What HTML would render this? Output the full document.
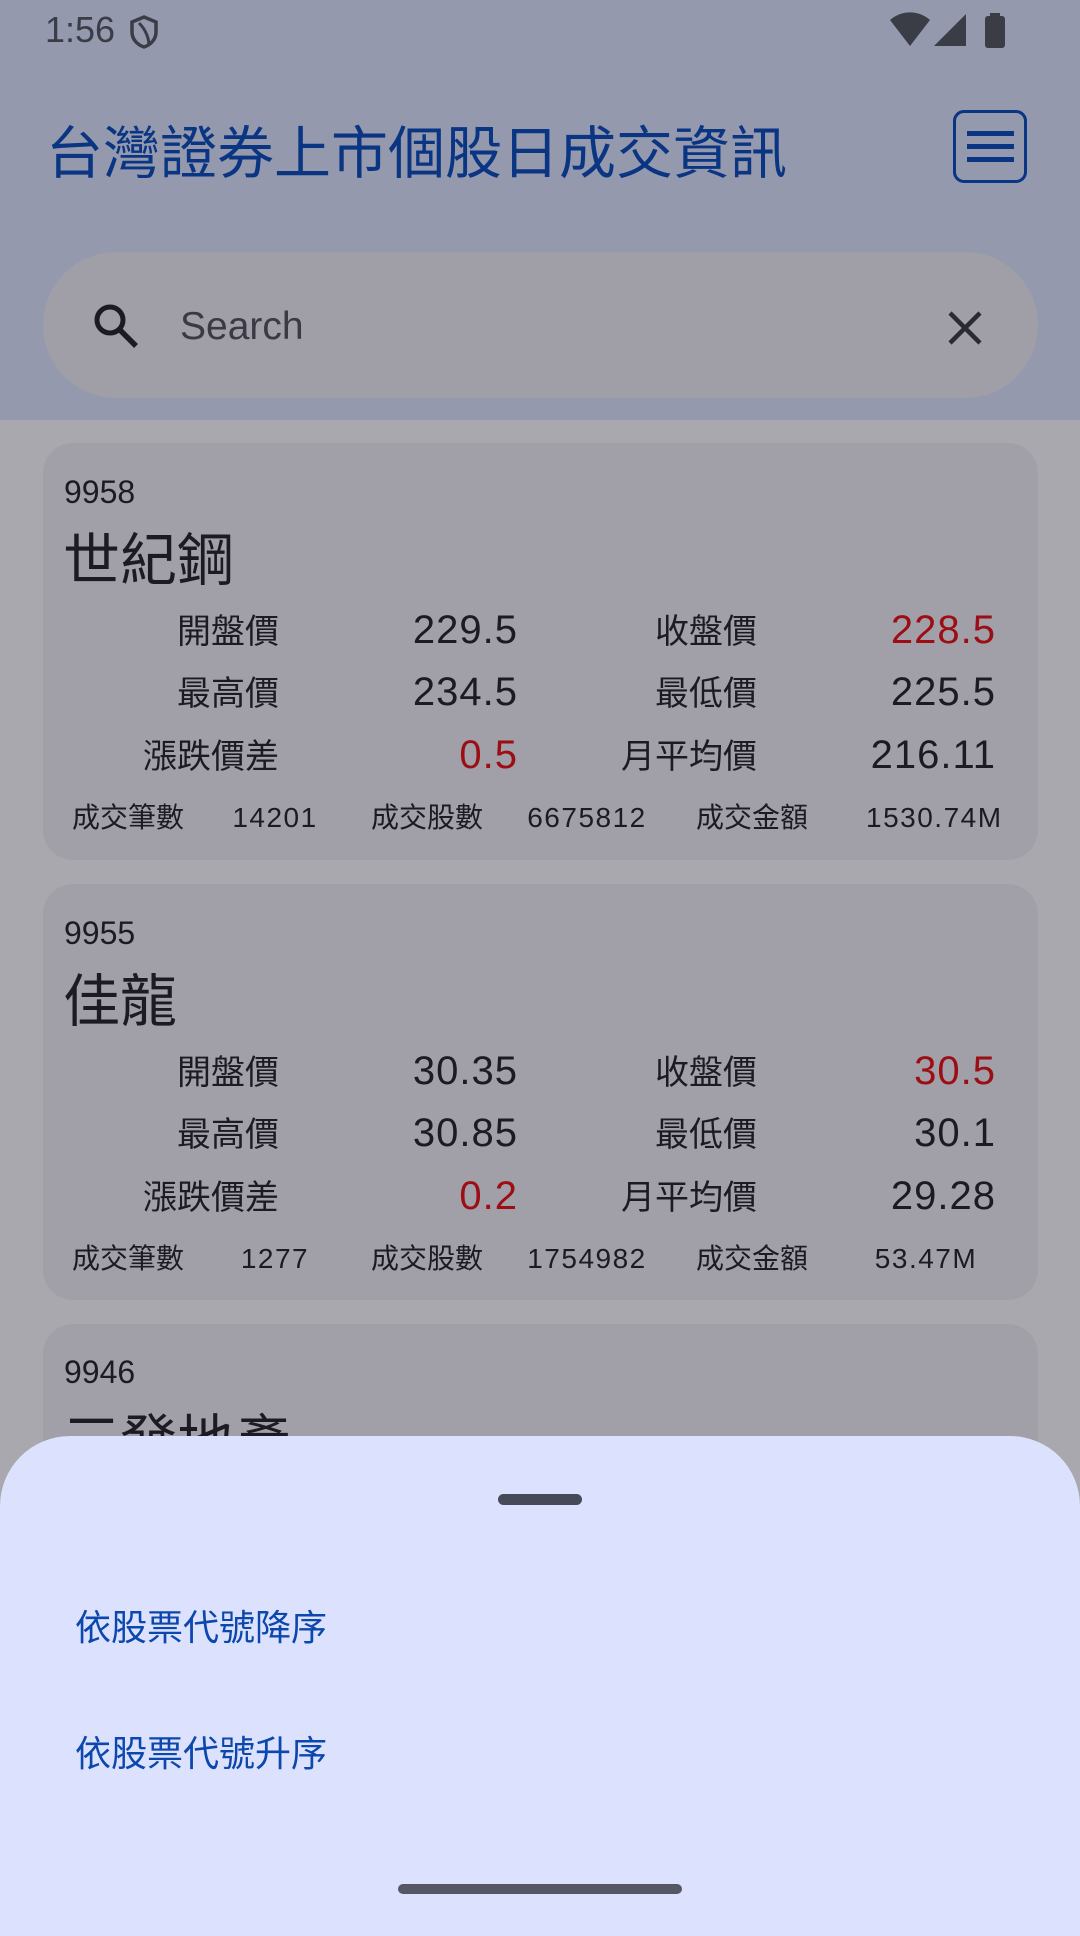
<!DOCTYPE html>
<html><head><meta charset="utf-8">
<style>
*{margin:0;padding:0;box-sizing:border-box}
body{width:1080px;height:1920px;position:relative;overflow:hidden;background:#a9a8ae;font-family:"Liberation Sans","Noto Sans CJK TC",sans-serif;color:#1c1b24}
.a{position:absolute;white-space:nowrap;line-height:1}
#hdr{position:absolute;left:0;top:0;width:1080px;height:420px;background:#9499ad}
.card{position:absolute;left:43px;width:995px;background:#a1a0a9;border-radius:30px}
.lab{position:absolute;font-size:34px;line-height:1;text-align:right;white-space:nowrap}
.val{position:absolute;font-size:40px;line-height:1;text-align:right;white-space:nowrap;letter-spacing:1px}
.r{color:#9c0d14}
.sm{position:absolute;font-size:28px;line-height:1;white-space:nowrap;text-align:center}
.n{letter-spacing:1.5px}
</style></head><body>
<div id="hdr"></div>
<div class="a" style="left:45px;top:12px;font-size:36px;color:#3a3c46">1:56</div>
<svg class="a" style="left:128px;top:14px" width="32" height="36" viewBox="0 0 32 36"><path d="M16 3 L28 8 V18 C28 26 22 31 16 33 C10 31 4 26 4 18 V8 Z" fill="none" stroke="#3a3c46" stroke-width="3.5"/><path d="M11 9 C16 14 20 20 21 30" fill="none" stroke="#3a3c46" stroke-width="3"/></svg>
<svg class="a" style="left:888px;top:12px" width="120" height="38" viewBox="0 0 120 38"><path d="M2 8 A30 30 0 0 1 42 8 L22 34 Z" fill="#3a3c46"/><path d="M46 34 L78 2 V34 Z" fill="#3a3c46"/><rect x="97" y="4" width="20" height="32" rx="3" fill="#3a3c46"/><rect x="102" y="1" width="10" height="5" fill="#3a3c46"/></svg>
<div class="a" style="left:46px;top:126px;font-size:57px;color:#0a3583">台灣證券上市個股日成交資訊</div>
<div class="a" style="left:953px;top:110px;width:74px;height:73px;border:3.5px solid #0a3583;border-radius:11px"></div>
<div class="a" style="left:967px;top:131px;width:47px;height:5px;background:#0a3583"></div>
<div class="a" style="left:967px;top:144px;width:47px;height:5px;background:#0a3583"></div>
<div class="a" style="left:967px;top:157px;width:47px;height:5px;background:#0a3583"></div>
<div class="a" style="left:43px;top:252px;width:995px;height:146px;background:#a09fa8;border-radius:73px"></div>
<svg class="a" style="left:90px;top:300px" width="60" height="60" viewBox="0 0 60 60"><circle cx="20" cy="20" r="13" fill="none" stroke="#1c1b24" stroke-width="5"/><path d="M29 29 L46 46" stroke="#1c1b24" stroke-width="5.5"/></svg>
<div class="a" style="left:180px;top:307px;font-size:39px;color:#3a3a44">Search</div>
<svg class="a" style="left:944px;top:307px" width="42" height="42" viewBox="0 0 42 42"><path d="M6 6 L36 36 M36 6 L6 36" stroke="#2a2a32" stroke-width="4.5"/></svg>

<div class="card" style="top:443px;height:417px">
 <div class="a" style="left:21px;top:33px;font-size:32px">9958</div>
 <div class="a" style="left:20px;top:90px;font-size:57px">世紀鋼</div>
 <div class="lab" style="right:759px;top:172px">開盤價</div><div class="val" style="right:520px;top:167px">229.5</div>
 <div class="lab" style="right:281px;top:172px">收盤價</div><div class="val r" style="right:42px;top:167px">228.5</div>
 <div class="lab" style="right:759px;top:234px">最高價</div><div class="val" style="right:520px;top:229px">234.5</div>
 <div class="lab" style="right:281px;top:234px">最低價</div><div class="val" style="right:42px;top:229px">225.5</div>
 <div class="lab" style="right:759px;top:297px">漲跌價差</div><div class="val r" style="right:520px;top:292px">0.5</div>
 <div class="lab" style="right:281px;top:297px">月平均價</div><div class="val" style="right:42px;top:292px">216.11</div>
 <div class="sm" style="left:25px;top:361px;width:120px">成交筆數</div><div class="sm n" style="left:172px;top:361px;width:120px">14201</div>
 <div class="sm" style="left:324px;top:361px;width:120px">成交股數</div><div class="sm n" style="left:484px;top:361px;width:120px">6675812</div>
 <div class="sm" style="left:649px;top:361px;width:120px">成交金額</div><div class="sm n" style="left:823px;top:361px;width:120px">1530.74M</div>
</div>

<div class="card" style="top:884px;height:416px">
 <div class="a" style="left:21px;top:33px;font-size:32px">9955</div>
 <div class="a" style="left:20px;top:90px;font-size:57px">佳龍</div>
 <div class="lab" style="right:759px;top:172px">開盤價</div><div class="val" style="right:520px;top:167px">30.35</div>
 <div class="lab" style="right:281px;top:172px">收盤價</div><div class="val r" style="right:42px;top:167px">30.5</div>
 <div class="lab" style="right:759px;top:234px">最高價</div><div class="val" style="right:520px;top:229px">30.85</div>
 <div class="lab" style="right:281px;top:234px">最低價</div><div class="val" style="right:42px;top:229px">30.1</div>
 <div class="lab" style="right:759px;top:297px">漲跌價差</div><div class="val r" style="right:520px;top:292px">0.2</div>
 <div class="lab" style="right:281px;top:297px">月平均價</div><div class="val" style="right:42px;top:292px">29.28</div>
 <div class="sm" style="left:25px;top:361px;width:120px">成交筆數</div><div class="sm n" style="left:172px;top:361px;width:120px">1277</div>
 <div class="sm" style="left:324px;top:361px;width:120px">成交股數</div><div class="sm n" style="left:484px;top:361px;width:120px">1754982</div>
 <div class="sm" style="left:649px;top:361px;width:120px">成交金額</div><div class="sm n" style="left:823px;top:361px;width:120px">53.47M</div>
</div>

<div class="card" style="top:1324px;height:416px">
 <div class="a" style="left:21px;top:32px;font-size:32px">9946</div>
 <div class="a" style="left:20px;top:90px;font-size:57px">三發地產</div>
</div>

<div class="a" style="left:0;top:1436px;width:1080px;height:500px;background:#dce1fd;border-radius:70px 70px 0 0"></div>
<div class="a" style="left:498px;top:1494px;width:84px;height:11px;background:#464a58;border-radius:6px"></div>
<div class="a" style="left:75px;top:1610px;font-size:36px;color:#0b47ad">依股票代號降序</div>
<div class="a" style="left:75px;top:1736px;font-size:36px;color:#0b47ad">依股票代號升序</div>
<div class="a" style="left:398px;top:1884px;width:284px;height:10px;background:#555764;border-radius:5px"></div>
</body></html>
